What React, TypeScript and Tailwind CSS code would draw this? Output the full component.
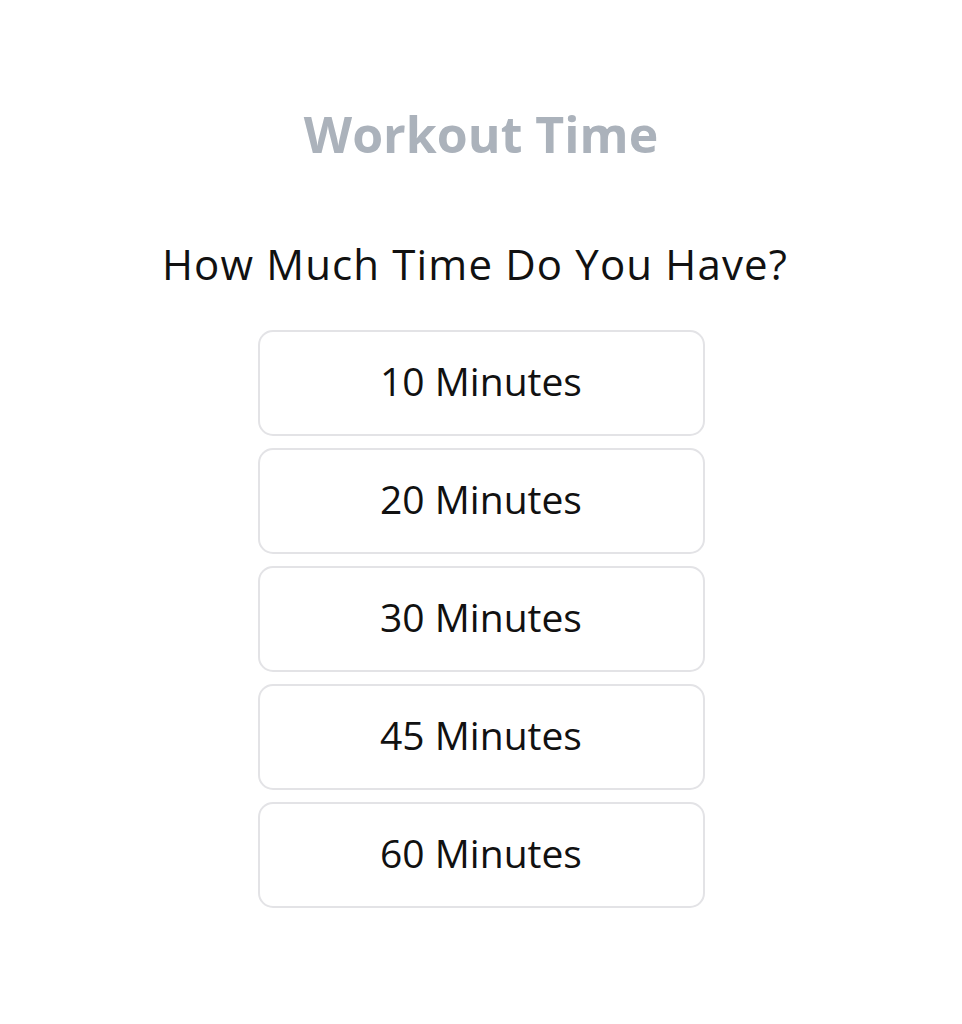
const OPTIONS = [10, 20, 30, 45, 60];

export default function App() {
  return (
    <div className="flex min-h-[1024px] w-full flex-col items-center bg-white pt-[104px] font-['Open_Sans',sans-serif]">
      <h1 className="text-[50px] font-bold leading-[60px] text-[#abb2bb]">Workout Time</h1>
      <h2 className="mt-[74px] pr-[12px] text-[42px] font-normal leading-[52px] tracking-[1.15px] text-[#111]">
        How Much Time Do You Have?
      </h2>
      <div className="mt-[40px] flex flex-col gap-[12px]">
        {OPTIONS.map((m) => (
          <button
            key={m}
            className="flex h-[106px] w-[447px] items-center justify-center rounded-[15px] border-2 border-[#e3e3e6] bg-white pb-[4px] text-[39px] text-[#111]"
          >
            {m} Minutes
          </button>
        ))}
      </div>
    </div>
  );
}
